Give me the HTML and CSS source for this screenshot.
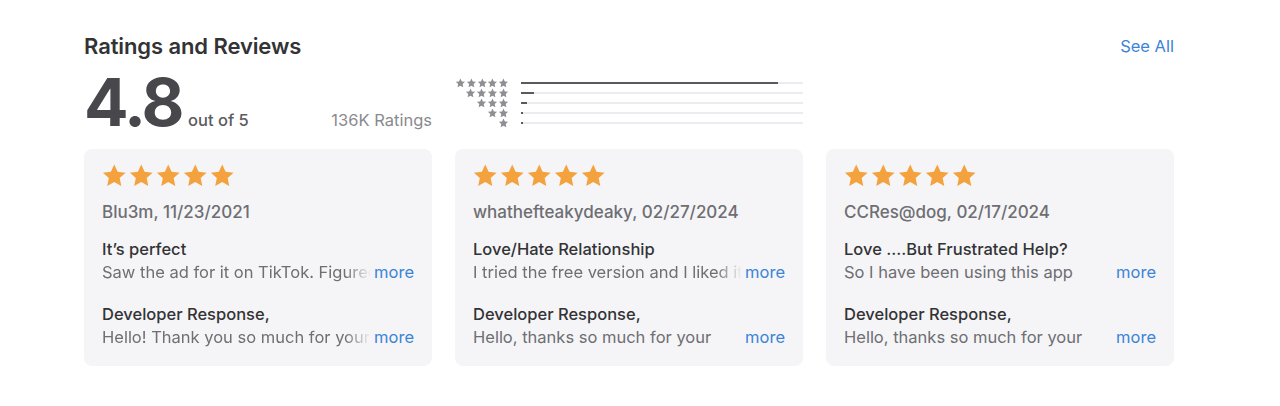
FILE: index.html
```html
<!DOCTYPE html>
<html lang="en">
<head>
    <meta charset="UTF-8">
    <meta name="viewport" content="width=device-width, initial-scale=1.0">
    <title>Ratings and Reviews</title>
    <link rel="stylesheet" href="styles.css">
</head>
<body>
    <svg width="0" height="0" class="defs">
        <symbol id="star" viewBox="0 0 24 24">
            <path d="M12 1.2l3.3 7.1 7.8.9-5.8 5.3 1.6 7.7L12 18.3l-6.9 3.9 1.6-7.7L.9 9.2l7.8-.9z"/>
        </symbol>
    </svg>

    <section class="reviews">
        <!-- Cabecera -->
        <div class="header">
            <h2>Ratings and Reviews</h2>
            <a href="#" class="see-all">See All</a>
        </div>

        <!-- Resumen -->
        <div class="summary">
            <div class="score">
                <div class="score-main">
                    <span class="big">4.8</span>
                    <span class="out-of">out of 5</span>
                </div>
                <span class="count">136K Ratings</span>
            </div>
            <div class="histogram">
                <div class="hist-row">
                    <span class="mini-stars"><svg><use href="#star"/></svg><svg><use href="#star"/></svg><svg><use href="#star"/></svg><svg><use href="#star"/></svg><svg><use href="#star"/></svg></span>
                    <span class="track"><span class="fill" style="width: 91%"></span></span>
                </div>
                <div class="hist-row">
                    <span class="mini-stars"><svg><use href="#star"/></svg><svg><use href="#star"/></svg><svg><use href="#star"/></svg><svg><use href="#star"/></svg></span>
                    <span class="track"><span class="fill" style="width: 4.5%"></span></span>
                </div>
                <div class="hist-row">
                    <span class="mini-stars"><svg><use href="#star"/></svg><svg><use href="#star"/></svg><svg><use href="#star"/></svg></span>
                    <span class="track"><span class="fill" style="width: 2%"></span></span>
                </div>
                <div class="hist-row">
                    <span class="mini-stars"><svg><use href="#star"/></svg><svg><use href="#star"/></svg></span>
                    <span class="track"><span class="fill" style="width: 0.7%"></span></span>
                </div>
                <div class="hist-row">
                    <span class="mini-stars"><svg><use href="#star"/></svg></span>
                    <span class="track"><span class="fill" style="width: 0.7%"></span></span>
                </div>
            </div>
        </div>

        <!-- Tarjetas -->
        <div class="cards">
            <div class="card">
                <div class="stars"><svg><use href="#star"/></svg><svg><use href="#star"/></svg><svg><use href="#star"/></svg><svg><use href="#star"/></svg><svg><use href="#star"/></svg></div>
                <p class="author">Blu3m, 11/23/2021</p>
                <p class="title">It’s perfect</p>
                <div class="line"><span class="text fade">Saw the ad for it on TikTok. Figured I would give it a try</span><a href="#" class="more">more</a></div>
                <p class="title dev">Developer Response,</p>
                <div class="line"><span class="text fade">Hello! Thank you so much for your kind review</span><a href="#" class="more">more</a></div>
            </div>
            <div class="card">
                <div class="stars"><svg><use href="#star"/></svg><svg><use href="#star"/></svg><svg><use href="#star"/></svg><svg><use href="#star"/></svg><svg><use href="#star"/></svg></div>
                <p class="author">whathefteakydeaky, 02/27/2024</p>
                <p class="title">Love/Hate Relationship</p>
                <div class="line"><span class="text fade">I tried the free version and I liked it so much</span><a href="#" class="more">more</a></div>
                <p class="title dev">Developer Response,</p>
                <div class="line"><span class="text">Hello, thanks so much for your</span><a href="#" class="more">more</a></div>
            </div>
            <div class="card">
                <div class="stars"><svg><use href="#star"/></svg><svg><use href="#star"/></svg><svg><use href="#star"/></svg><svg><use href="#star"/></svg><svg><use href="#star"/></svg></div>
                <p class="author">CCRes@dog, 02/17/2024</p>
                <p class="title">Love ....But Frustrated Help?</p>
                <div class="line"><span class="text">So I have been using this app</span><a href="#" class="more">more</a></div>
                <p class="title dev">Developer Response,</p>
                <div class="line"><span class="text">Hello, thanks so much for your</span><a href="#" class="more">more</a></div>
            </div>
        </div>
    </section>
</body>
</html>
```

FILE: styles.css
```css
body {
    margin: 0;
    background: #fff;
    font-family: Inter, "Noto Sans", sans-serif;
    color: #1d1d1f;
}
.defs {
    position: absolute;
}
.reviews {
    width: 1090px;
    padding: 33px 0 0 84px;
}
.header {
    display: flex;
    justify-content: space-between;
    align-items: center;
    height: 26px;
}
.header h2 {
    margin: 0;
    font-size: 22px;
    font-weight: 600;
    line-height: 26px;
    color: #333336;
    letter-spacing: -0.1px;
}
.see-all {
    font-size: 16.5px;
    color: #3c84d6;
    text-decoration: none;
}
.summary {
    display: grid;
    grid-template-columns: 348px 348px;
    column-gap: 23px;
    height: 90px;
}
.score {
    display: flex;
    justify-content: space-between;
    align-items: baseline;
    padding-top: 13px;
}
.score-main {
    display: flex;
    align-items: baseline;
}
.big {
    font-size: 66px;
    font-weight: 700;
    line-height: 60px;
    color: #48484c;
    letter-spacing: -2.5px;
}
.out-of {
    margin-left: 6px;
    font-size: 16.5px;
    font-weight: 500;
    color: #5c5c60;
}
.count {
    font-size: 16.5px;
    color: #8a8a8e;
}
.histogram {
    padding-top: 19px;
}
.hist-row {
    display: flex;
    align-items: center;
    height: 10px;
}
.mini-stars {
    display: flex;
    justify-content: flex-end;
    width: 54px;
    margin-right: 12px;
}
.mini-stars svg {
    width: 11px;
    height: 10px;
    fill: #8e8e93;
}
.track {
    flex: 1;
    height: 2px;
    background: #ececf0;
}
.fill {
    display: block;
    height: 2px;
    background: #5a5a5e;
}
.cards {
    display: grid;
    grid-template-columns: repeat(3, 348px);
    column-gap: 23px;
}
.card {
    background: #f5f5f7;
    border-radius: 8px;
    padding: 14px 18px 18px;
}
.stars {
    display: flex;
    gap: 2.5px;
    height: 27px;
}
.stars svg {
    width: 24.5px;
    height: 25px;
    fill: #f3a23d;
}
.card p {
    margin: 0;
}
.author {
    margin-top: 12px !important;
    font-size: 17px;
    font-weight: 500;
    line-height: 20px;
    color: #6e6e73;
}
.title {
    margin-top: 16px !important;
    font-size: 16.5px;
    font-weight: 500;
    line-height: 23px;
    color: #333336;
}
.title.dev {
    margin-top: 20px !important;
}
.line {
    display: flex;
    font-size: 16.5px;
    line-height: 22px;
}
.text {
    flex: 1;
    margin-right: 3px;
    white-space: nowrap;
    overflow: hidden;
    color: #6e6e73;
}
.text.fade {
    -webkit-mask-image: linear-gradient(to right, #000 calc(100% - 26px), transparent);
    mask-image: linear-gradient(to right, #000 calc(100% - 26px), transparent);
}
.more {
    color: #3c84d6;
    text-decoration: none;
}
```
